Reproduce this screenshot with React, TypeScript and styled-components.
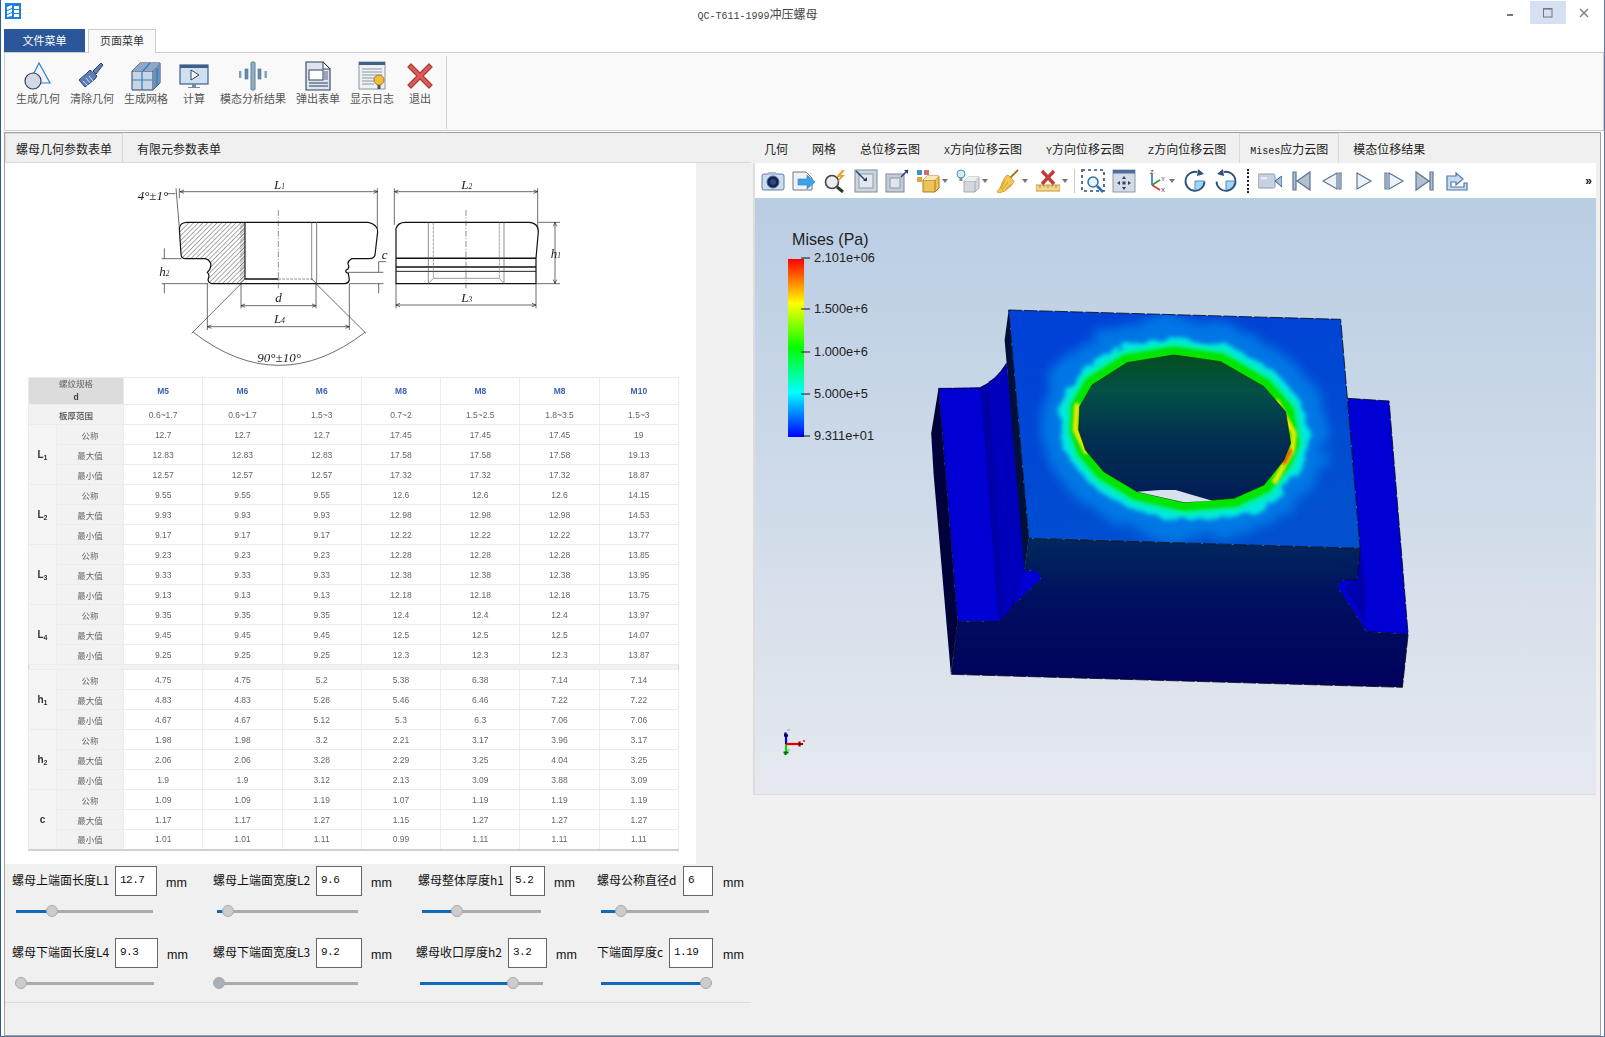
import React from "react";
import styled, { createGlobalStyle } from "styled-components";

const CJK = `"Noto Sans CJK SC", "Liberation Sans", sans-serif`;

const Global = createGlobalStyle`
  html, body { margin: 0; padding: 0; background: #fff; }
  * { box-sizing: border-box; }
  body { font-family: ${CJK}; }
`;

const Window = styled.div`
  width: 1605px;
  height: 1037px;
  background: #fff;
  border-left: 1px solid #2b579a;
  border-right: 1px solid #5f7698;
  border-bottom: 1px solid #5f7698;
  display: flex;
  flex-direction: column;
  overflow: hidden;
`;
const TitleBar = styled.header`
  height: 29px;
  display: flex;
  align-items: flex-start;
  padding-right: 2px;
  flex: none;
`;
const AppLogo = styled.svg`
  width: 16px;
  height: 16px;
  margin: 3px 0 0 4px;
  flex: none;
`;
const Title = styled.div`
  flex: 1;
  text-align: center;
  font-size: 12px;
  line-height: 16px;
  padding-top: 6px;
  color: #444;
`;
const Mono = styled.span<{ $size?: number }>`
  font-family: "Liberation Mono", monospace;
  font-size: ${(p) => p.$size ?? 10}px;
`;
const WinButton = styled.div<{ $hover?: boolean }>`
  width: 36px;
  height: 23px;
  display: flex;
  align-items: center;
  justify-content: center;
  background: ${(p) => (p.$hover ? "#d5e1f2" : "transparent")};
  margin-top: 1px;
`;
const MenuTabs = styled.nav`
  height: 23px;
  flex: none;
  display: flex;
  padding-left: 3px;
  position: relative;
  z-index: 1;
`;
const FileTab = styled.div`
  width: 81px;
  height: 23px;
  background: #2b579a;
  color: #fff;
  font-size: 11px;
  padding-bottom: 2px;
  display: flex;
  align-items: center;
  justify-content: center;
  margin-right: 3px;
`;
const PageTab = styled.div`
  width: 68px;
  height: 24px;
  background: #f9f9f9;
  border: 1px solid #ccc;
  border-bottom: none;
  color: #333;
  font-size: 11px;
  padding-bottom: 3px;
  display: flex;
  align-items: center;
  justify-content: center;
`;
const Ribbon = styled.section`
  height: 79px;
  flex: none;
  margin-left: 3px;
  background: #f9f9f9;
  border: 1px solid #ccc;
  display: flex;
  padding: 8px 0 0 11px;
  gap: 10px;
`;
const RibbonButton = styled.div`
  min-width: 32px;
  display: flex;
  flex-direction: column;
  align-items: center;
  font-size: 11px;
  line-height: 14px;
  color: #555;
  white-space: nowrap;
  svg {
    width: 30px;
    height: 30px;
    flex: none;
  }
`;
const RibbonDivider = styled.div`
  width: 1px;
  height: 73px;
  margin: -5px 0 0 0;
  background: #d4d4d4;
`;
const Frame = styled.main`
  margin: 1px 3px 0 3px;
  flex: 1;
  min-height: 0;
  background: #f0f0f0;
  border: 1px solid #a0a0a0;
  display: flex;
  gap: 2px;
`;
const LeftPane = styled.div`
  width: 746px;
  flex: none;
  display: flex;
  flex-direction: column;
`;
const TabStrip = styled.div`
  height: 30px;
  flex: none;
  display: flex;
  border-bottom: 1px solid #d9d9d9;
`;
const PaneTab = styled.div<{ $active?: boolean; $pad?: number; $margin?: string }>`
  height: 30px;
  padding: 0 ${(p) => p.$pad ?? 12}px;
  margin: ${(p) => p.$margin ?? "0"};
  font-size: 12px;
  line-height: 29px;
  color: #222;
  white-space: nowrap;
  border: 1px solid ${(p) => (p.$active ? "#d9d9d9" : "transparent")};
  border-bottom: none;
`;
const Sheet = styled.div`
  width: 691px;
  height: 701px;
  background: #fff;
  flex: none;
  padding-top: 2px;
`;
const Drawing = styled.svg`
  display: block;
  width: 500px;
  height: 210px;
  margin-left: 95px;
  filter: blur(0.4px);
`;
const SpecTable = styled.table`
  width: 651px;
  margin: 2px 0 0 23px;
  border-collapse: collapse;
  table-layout: fixed;
  font-family: "Liberation Sans", ${CJK};
  font-size: 8.5px;
  color: #666;
  text-align: center;
  filter: blur(0.3px);
  border: 1px solid #d0d0d0;
  border-bottom-width: 2px;
  td, th { padding: 0; font-weight: normal; border: 1px solid #ececec; height: 20px; }
`;
const HeadCell = styled.th`
  background: #dcdcdc;
  line-height: 13px;
  height: 27px !important;
  b { font-weight: bold; color: #444; }
`;
const SpecHead = styled.th`
  font-weight: bold !important;
  color: #3a62b8;
`;
const SideCell = styled.td`
  background: #f2f2f2;
`;
const KeyCell = styled.td`
  background: #f5f5f5;
  font-weight: bold !important;
  font-size: 10px;
  color: #333;
  sub { font-size: 7px; vertical-align: -2px; line-height: 0; }
`;
const GroupGap = styled.tr`
  td { height: 5px !important; background: #f2f2f2; border-left: none; border-right: none; }
`;
const ParamGrid = styled.div`
  display: grid;
  grid-template-columns: 201px 203px 181px 150px;
  grid-auto-rows: 72px;
  padding: 2px 0 0 7px;
  height: 139px;
  border-bottom: 1px solid #dcdcdc;
`;
const ParamGroup = styled.div<{ $indent?: number }>`
  padding-left: ${(p) => p.$indent ?? 0}px;
`;
const ParamLine = styled.div`
  height: 30px;
  display: flex;
  align-items: center;
`;
const ParamLabel = styled.label<{ $w: number }>`
  width: ${(p) => p.$w}px;
  flex: none;
  font-size: 12px;
  color: #111;
  white-space: nowrap;
  position: relative;
  margin-top: -3px;
`;
const ParamBox = styled.div<{ $w: number }>`
  width: ${(p) => p.$w}px;
  height: 30px;
  flex: none;
  background: #fff;
  border: 1px solid #666;
  font-family: "Liberation Mono", monospace;
  font-size: 11px;
  letter-spacing: -0.5px;
  line-height: 26px;
  padding-left: 4px;
  color: #111;
`;
const Unit = styled.span<{ $gap?: number }>`
  font-family: "Liberation Sans", sans-serif;
  font-size: 12.5px;
  color: #111;
  margin: 3px 0 0 ${(p) => p.$gap ?? 9}px;
`;
const SliderTrack = styled.div<{ $w: number }>`
  width: ${(p) => p.$w}px;
  height: 3px;
  margin: 14px 0 0 4px;
  background: #aaa;
  position: relative;
`;
const SliderFill = styled.div`
  position: absolute;
  left: 0;
  top: 0;
  height: 3px;
  background: #1168b8;
`;
const SliderKnob = styled.div<{ $dim?: boolean }>`
  position: absolute;
  top: -5px;
  width: 12px;
  height: 12px;
  margin-left: -6px;
  border-radius: 50%;
  background: ${(p) => (p.$dim ? "#aab0b6" : "#ccc")};
  border: 1px solid #aaa;
`;
const RightPane = styled.div`
  flex: 1;
  min-width: 0;
  display: flex;
  flex-direction: column;
  padding-right: 4px;
`;
const RightTabs = styled(TabStrip)`
  margin: 0 -4px 0 -1px;
  border-bottom: none;
  height: 30px;
`;
const ToolArea = styled.div`
  border-left: 2px solid #ddd;
  border-right: 0;
`;
const Toolbar = styled.div`
  height: 35px;
  background: #fff;
  display: flex;
  align-items: center;
  padding-left: 2px;
`;
const ToolButton = styled.div<{ $menu?: boolean }>`
  width: ${(p) => (p.$menu ? 40 : 31)}px;
  height: 30px;
  flex: none;
  display: flex;
  align-items: center;
  justify-content: center;
  gap: 2px;
  svg { width: 24px; height: 24px; flex: none; }
`;
const Caret = styled.i`
  width: 0;
  height: 0;
  flex: none;
  border: 3px solid transparent;
  border-top: 4px solid #777;
  border-bottom: none;
`;
const ToolSep = styled.div<{ $dotted?: boolean; $w: number }>`
  width: ${(p) => p.$w}px;
  flex: none;
  height: 24px;
  display: flex;
  justify-content: center;
  &::after {
    content: "";
    display: block;
    border-left: ${(p) => (p.$dotted ? "2px dotted #222" : "1px solid #ccc")};
    height: 100%;
  }
`;
const Overflow = styled.div`
  margin-left: auto;
  margin-right: 4px;
  font-family: "Liberation Sans", sans-serif;
  font-size: 12px;
  font-weight: bold;
  color: #111;
`;
const Viewport = styled.div`
  height: 597px;
  background: linear-gradient(#b9cde3, #e6e9ef);
  border-bottom: 1px solid #ddd;
  position: relative;
  svg { display: block; width: 100%; height: 100%; }
`;

const Cam = () => (<svg viewBox="0 0 24 24"><rect x="1" y="5" width="22" height="16" rx="2" fill="#cfdcec" stroke="#5f7fa8" /><rect x="7" y="3" width="8" height="3" fill="#a9bdd6" /><circle cx="12" cy="13" r="6" fill="#16264e" stroke="#4a6a9a" /><circle cx="12" cy="13" r="3" fill="#2a4a8a" /></svg>);
const Exp = () => (<svg viewBox="0 0 24 24"><path d="M1 3h13l6 6v12H1z" fill="#eef1f5" stroke="#777" /><path d="M6 10h9V6l8 7-8 7v-4H6z" fill="#3ea3e6" stroke="#2a7fc0" strokeWidth=".6" /></svg>);
const ZoomBolt = () => (<svg viewBox="0 0 24 24"><circle cx="9" cy="13" r="6.5" fill="#e6edf4" stroke="#444" strokeWidth="1.6" /><path d="M14 18l6 5" stroke="#333" strokeWidth="3" /><path d="M19 1l-6 7h4l-3 6 8-8h-4l4-5z" fill="#e8a33a" /></svg>);
const BoxIn = () => (<svg viewBox="0 0 24 24"><rect x="1" y="1" width="22" height="22" fill="#cdd6e0" stroke="#7a8a9c" /><rect x="5" y="5" width="14" height="14" fill="#e4e9ef" stroke="#8a98a8" /><path d="M2 2l10 10" stroke="#1f3f70" strokeWidth="1.4" /><path d="M9 12h4V8z" fill="#1f3f70" /></svg>);
const BoxOut = () => (<svg viewBox="0 0 24 24"><rect x="1" y="5" width="18" height="18" fill="#c3ccd6" stroke="#7a8a9c" /><rect x="5" y="9" width="10" height="10" fill="#dfe5eb" stroke="#8a98a8" /><path d="M16 8l7-7" stroke="#1f3f70" strokeWidth="1.4" /><path d="M19 1h4v4z" fill="#1f3f70" /></svg>);
const Cubes = () => (<svg viewBox="0 0 24 24"><rect x="1" y="1" width="5" height="5" fill="#3f8fd8" /><rect x="8" y="1" width="5" height="5" fill="#d46a6a" /><rect x="1" y="8" width="5" height="5" fill="#e8a33a" /><path d="M7 11l4-4h12v12l-4 4H7z" fill="#eec15a" stroke="#a8801f" /><path d="M7 11h12v12M19 11l4-4" stroke="#a8801f" fill="none" /><path d="M11 7h12l-4 4H7z" fill="#f6e6b8" /></svg>);
const Bulb = () => (<svg viewBox="0 0 24 24"><circle cx="5" cy="5" r="4" fill="#d6ecfb" stroke="#3a8fd0" /><rect x="3.4" y="9" width="3" height="3" fill="#888" /><path d="M8 12l4-4h11v11l-4 4H8z" fill="#d4d8dc" stroke="#a8aeb4" /><path d="M8 12h11v11M19 12l4-4" stroke="#a8aeb4" fill="none" /><path d="M12 8h11l-4 4H8z" fill="#eef0f2" /></svg>);
const Broom = () => (<svg viewBox="0 0 24 24"><path d="M22 1L13 10" stroke="#a8701f" strokeWidth="1.8" /><path d="M10 7l2-1 6 6-1 2-2 3-6 5-6 2-2-1 3-4 2-5 2-4z" fill="#f6c552" stroke="#c08a20" strokeWidth=".7" /><path d="M9 11l-4 9M12 13l-6 8M15 15l-5 5" stroke="#c99428" strokeWidth=".7" fill="none" /></svg>);
const RuleX = () => (<svg viewBox="0 0 24 24"><rect x="0" y="16" width="24" height="6" fill="#f2d68a" stroke="#c49a3a" /><path d="M4 16v3M8 16v2M12 16v3M16 16v2M20 16v3" stroke="#b08a30" /><path d="M6 2l12 13M18 2L6 15" stroke="#c33a3a" strokeWidth="3.4" /></svg>);
const ZoomBox = () => (<svg viewBox="0 0 24 24"><rect x="1" y="1" width="22" height="21" fill="none" stroke="#2a4a8a" strokeWidth="1.6" strokeDasharray="3 3" /><circle cx="12" cy="13" r="5" fill="#eaf3fb" stroke="#2f6fb0" strokeWidth="1.5" /><path d="M16 17l6 6" stroke="#2f6fb0" strokeWidth="2.6" /></svg>);
const Pan = () => (<svg viewBox="0 0 24 24"><rect x="1" y="1" width="22" height="22" fill="#d4dbe6" stroke="#8a98aa" /><rect x="1" y="1" width="22" height="3.5" fill="#4f6f9c" /><path d="M12 7l2 3h-4zM12 21l2-3h-4zM5 14l3-2v4zM19 14l-3-2v4z" fill="#2a3f66" /><rect x="10.5" y="12.5" width="3" height="3" fill="#2a3f66" /></svg>);
const Axes = () => (<svg viewBox="0 0 24 24"><path d="M9 16V5" stroke="#2a6fd0" strokeWidth="1.6" /><path d="M9 16l8-5" stroke="#2a9a3a" strokeWidth="1.6" /><path d="M9 16l8 5" stroke="#d03a3a" strokeWidth="1.6" /><text x="7" y="4.6" fontSize="6" fontFamily="Liberation Sans" fill="#333">Z</text><text x="18" y="12" fontSize="6" fontFamily="Liberation Sans" fill="#333">Y</text><text x="18" y="23" fontSize="6" fontFamily="Liberation Sans" fill="#333">X</text></svg>);
const RotR = () => (<svg viewBox="0 0 24 24"><path d="M12 12h9.5a9.5 9.5 0 0 1-9.5 9.5z" fill="#9fd4f2" /><path d="M14 3a9.5 9.5 0 1 0 7.5 9.5" fill="none" stroke="#2f4f78" strokeWidth="1.8" /><path d="M12 12v9.5M12 12h9.5" stroke="#4a90c8" /><path d="M15 0l6 5-7 2z" fill="#2f4f78" /></svg>);
const RotL = () => (<svg viewBox="0 0 24 24"><path d="M12 12h9.5a9.5 9.5 0 0 1-9.5 9.5z" fill="#9fd4f2" /><path d="M10 3a9.5 9.5 0 1 1-7.5 9.5" fill="none" stroke="#2f4f78" strokeWidth="1.8" /><path d="M12 12v9.5M12 12h9.5" stroke="#4a90c8" /><path d="M9 0L3 5l7 2z" fill="#2f4f78" /></svg>);
const Video = () => (<svg viewBox="0 0 24 24"><rect x="0" y="5" width="17" height="14" rx="1.5" fill="#c6d2e0" stroke="#8a9bb0" /><rect x="3" y="8" width="6" height="2.4" fill="#e8eef4" /><path d="M17 12l7-5v11z" fill="#9fc6e6" stroke="#2f557f" /></svg>);
const Transport = ({ d, fill }: { d: string; fill: string }) => (<svg viewBox="0 0 24 24"><path d={d} fill={fill} stroke="#5c7497" strokeWidth="1.2" /></svg>);
const ShareOut = () => (<svg viewBox="0 0 24 24"><path d="M3 7h9V4l7 6-7 6v-3H7v5h13v-4h3v7H3z" fill="#c8daf0" stroke="#4f78a8" strokeWidth="1.2" /></svg>);

const RibGeom = () => (<svg viewBox="0 0 30 30"><path d="M16 2l11 20H6z" fill="#f2f6fa" stroke="#2a80c8" strokeWidth="1.2" /><circle cx="10" cy="20" r="8" fill="#d4d8e2" stroke="#2f3f66" strokeWidth="1.2" /></svg>);
const RibBrush = () => (<svg viewBox="0 0 30 30"><path d="M24 2l2 2-7 9-3-3z" fill="#5a7fb8" stroke="#2f3f66" /><path d="M13 9l7 6-2 3-10 8-6-7 8-7z" fill="#5a7fb8" stroke="#2f3f66" /><path d="M6 20l5 5M9 17l5 6M12 15l4 5" stroke="#cfdcec" strokeWidth="1" /></svg>);
const RibMesh = () => (<svg viewBox="0 0 30 30"><path d="M1 10l8-8h20v20l-7 7H1z" fill="#c8d6e4" stroke="#2f3f66" /><path d="M1 10h21v19M22 10l7-8" stroke="#2f3f66" fill="none" /><path d="M9 2h20l-7 8H1z" fill="#8fa8c8" /><path d="M22 10l7-8v20l-7 7z" fill="#6f8fb8" /><path d="M11 10v19M1 19h21M19 2l-7 8M26 7v18" stroke="#2a7fc0" strokeWidth="1.2" /></svg>);
const RibRun = () => (<svg viewBox="0 0 30 30"><rect x="1" y="4" width="28" height="19" fill="#cfe0f0" stroke="#3f5f88" strokeWidth="1.2" /><rect x="1" y="4" width="28" height="3" fill="#3f5f88" /><path d="M12 9l8 5-8 5z" fill="#fff" stroke="#2f3f66" /><path d="M13 23h4v3h-4zM9 26h12v1H9z" fill="#7a8a9c" /></svg>);
const RibModal = () => (<svg viewBox="0 0 30 30"><rect x="13" y="1" width="4" height="28" rx="1" fill="#8fb0c4" stroke="#5f8096" /><rect x="7" y="8" width="3" height="10" fill="#6f8fa8" stroke="#3f6f98" strokeWidth=".6" /><rect x="20" y="8" width="3" height="10" fill="#6f8fa8" stroke="#3f6f98" strokeWidth=".6" /><rect x="1" y="10" width="2.4" height="7" fill="#7fa0b8" /><rect x="26.5" y="10" width="2.4" height="7" fill="#7fa0b8" /></svg>);
const RibSheet = () => (<svg viewBox="0 0 30 30"><path d="M3 1h17l7 7v21H3z" fill="#dfe5ec" stroke="#2f3f66" strokeWidth="1.1" /><path d="M20 1v7h7z" fill="#fff" stroke="#2f3f66" /><rect x="6" y="9" width="14" height="10" fill="#fff" stroke="#2f3f66" /><rect x="21" y="10" width="4" height="9" fill="#9aa6b4" /><path d="M6 22h19M6 25h19" stroke="#2f3f66" /></svg>);
const RibLog = () => (<svg viewBox="0 0 30 30"><rect x="2" y="1" width="26" height="27" fill="#eef1f4" stroke="#8a96a6" /><rect x="2" y="1" width="26" height="3" fill="#3f5f88" /><path d="M5 8h20M5 11h20M5 14h20M5 17h14M5 20h12M5 23h12" stroke="#8a98a8" /><circle cx="22" cy="19" r="5" fill="#f2bf3a" stroke="#b07a1a" /><rect x="20.5" y="24" width="3" height="4" fill="#555" /></svg>);
const RibExit = () => (<svg viewBox="0 0 30 30"><path d="M3 6l3-3 9 9 9-9 3 3-9 9 9 9-3 3-9-9-9 9-3-3 9-9z" fill="#e05a5a" stroke="#a83a3a" strokeWidth="1.2" strokeLinejoin="round" /></svg>);

const ribbonItems: [string, React.FC][] = [
  ["生成几何", RibGeom], ["清除几何", RibBrush], ["生成网格", RibMesh], ["计算", RibRun],
  ["模态分析结果", RibModal], ["弹出表单", RibSheet], ["显示日志", RibLog], ["退出", RibExit],
];

const rows: { key?: React.ReactNode; span?: number; side: string; v: string[] }[] = [
  { key: <>L<sub>1</sub></>, side: "公称", v: ["12.7","12.7","12.7","17.45","17.45","17.45","19"] },
  { side: "最大值", v: ["12.83","12.83","12.83","17.58","17.58","17.58","19.13"] },
  { side: "最小值", v: ["12.57","12.57","12.57","17.32","17.32","17.32","18.87"] },
  { key: <>L<sub>2</sub></>, side: "公称", v: ["9.55","9.55","9.55","12.6","12.6","12.6","14.15"] },
  { side: "最大值", v: ["9.93","9.93","9.93","12.98","12.98","12.98","14.53"] },
  { side: "最小值", v: ["9.17","9.17","9.17","12.22","12.22","12.22","13.77"] },
  { key: <>L<sub>3</sub></>, side: "公称", v: ["9.23","9.23","9.23","12.28","12.28","12.28","13.85"] },
  { side: "最大值", v: ["9.33","9.33","9.33","12.38","12.38","12.38","13.95"] },
  { side: "最小值", v: ["9.13","9.13","9.13","12.18","12.18","12.18","13.75"] },
  { key: <>L<sub>4</sub></>, side: "公称", v: ["9.35","9.35","9.35","12.4","12.4","12.4","13.97"] },
  { side: "最大值", v: ["9.45","9.45","9.45","12.5","12.5","12.5","14.07"] },
  { side: "最小值", v: ["9.25","9.25","9.25","12.3","12.3","12.3","13.87"] },
  { key: <>h<sub>1</sub></>, side: "公称", v: ["4.75","4.75","5.2","5.38","6.38","7.14","7.14"] },
  { side: "最大值", v: ["4.83","4.83","5.28","5.46","6.46","7.22","7.22"] },
  { side: "最小值", v: ["4.67","4.67","5.12","5.3","6.3","7.06","7.06"] },
  { key: <>h<sub>2</sub></>, side: "公称", v: ["1.98","1.98","3.2","2.21","3.17","3.96","3.17"] },
  { side: "最大值", v: ["2.06","2.06","3.28","2.29","3.25","4.04","3.25"] },
  { side: "最小值", v: ["1.9","1.9","3.12","2.13","3.09","3.88","3.09"] },
  { key: "c", side: "公称", v: ["1.09","1.09","1.19","1.07","1.19","1.19","1.19"] },
  { side: "最大值", v: ["1.17","1.17","1.27","1.15","1.27","1.27","1.27"] },
  { side: "最小值", v: ["1.01","1.01","1.11","0.99","1.11","1.11","1.11"] },
];

const params = [
  { label: "螺母上端面长度L1", lw: 103, w: 42, val: "12.7", track: 137, pos: 36 },
  { label: "螺母上端面宽度L2", lw: 103, w: 46, val: "9.6", track: 141, pos: 11 },
  { label: "螺母整体厚度h1", lw: 92, w: 35, val: "5.2", track: 119, pos: 35, indent: 2 },
  { label: "螺母公称直径d", lw: 86, w: 30, val: "6", track: 108, pos: 20, gap: 10 },
  { label: "螺母下端面长度L4", lw: 103, w: 43, val: "9.3", track: 138, pos: 5 },
  { label: "螺母下端面宽度L3", lw: 103, w: 46, val: "9.2", track: 141, pos: 2, dim: true },
  { label: "螺母收口厚度h2", lw: 92, w: 39, val: "3.2", track: 123, pos: 93 },
  { label: "下端面厚度c", lw: 72, w: 44, val: "1.19", track: 108, pos: 105, gap: 10 },
];

const Dim = ({ d }: { d: string }) => <path d={d} fill="none" stroke="#222" strokeWidth="2" />;
const DimText = ({ x, y, t, s }: { x: number; y: number; t: string; s?: string }) => (
  <text x={x} y={y} fontFamily="Liberation Serif" fontStyle="italic" fontSize="39" fill="#222">
    {t}
    {s && <tspan fontSize="22">{s}</tspan>}
  </text>
);

const NutDrawing = () => (
  <Drawing viewBox="0 0 1500 630">
    <defs>
      <pattern id="hatch" width="10" height="10" patternUnits="userSpaceOnUse" patternTransform="rotate(45)">
        <rect width="10" height="10" fill="#fff" />
        <path d="M0 0V10" stroke="#555" strokeWidth="3" />
      </pattern>
      <pattern id="hatchFine" width="6" height="6" patternUnits="userSpaceOnUse" patternTransform="rotate(45)">
        <path d="M0 0V6" stroke="#444" strokeWidth="2.4" />
      </pattern>
    </defs>
    <path d="M238 190L262 172H435V340L420 356H335Q322 352 325 340Q330 330 322 322Q335 310 332 295Q325 281 312 281H255Q243 280 243 268Z" fill="url(#hatch)" />
    <path d="M420 172H435V342L420 356z" fill="url(#hatchFine)" />
    <path d="M238 190Q240 172 262 172H805Q833 178 833 200L825 270Q822 281 808 281H755Q740 290 745 300Q750 310 738 316Q735 322 745 325L748 345Q745 355 735 356H335Q322 352 325 340Q330 330 322 322Q335 310 332 295Q325 281 312 281H255Q243 280 243 268Z" fill="none" stroke="#111" strokeWidth="3.6" />
    <path d="M435 172V342" stroke="#111" strokeWidth="3.4" />
    <path d="M635 172V345" stroke="#555" strokeWidth="2" />
    <path d="M650 172V356" stroke="#777" strokeWidth="3" />
    <path d="M435 342H535" stroke="#111" strokeWidth="4.4" />
    <path d="M535 342H640" stroke="#555" strokeWidth="2" strokeDasharray="8 4" />
    <path d="M420 356L435 342M650 356L635 342" stroke="#333" strokeWidth="2" />
    <path d="M535 135V370" stroke="#444" strokeWidth="1.8" strokeDasharray="18 5 3 5" />
    <Dim d="M240 80H833M252 75L240 80L252 85M821 75L833 80L821 85M832 70V190M228 70L238 190M238 70V100M200 86H226" />
    <DimText x={113} y={105} t="4°±1°" />
    <DimText x={522} y={72} t="L" s="1" />
    <Dim d="M193 250V281M193 356V385M185 281H245M185 356H325" />
    <DimText x={178} y={332} t="h" s="2" />
    <Dim d="M836 290V322M836 356V385M745 322H850M748 356H850M836 290H858" />
    <DimText x={845} y={282} t="c" />
    <Dim d="M423 422H648M435 417L423 422L435 427M636 417L648 422L636 427M423 356V430M648 356V430" />
    <DimText x={526} y={412} t="d" />
    <Dim d="M322 485H748M334 480L322 485L334 490M736 480L748 485L736 490M322 356V495M748 356V495" />
    <DimText x={522} y={475} t="L" s="4" />
    <Dim d="M423 356L275 505M648 356L798 505M280 502Q537 700 795 502" />
    <DimText x={472} y={592} t="90°±10°" />
    <path d="M888 190Q895 172 915 172H1290Q1315 175 1315 200L1308 280V356H888V280Z" fill="none" stroke="#111" strokeWidth="3.6" />
    <path d="M888 280H1308M888 306H1308" stroke="#111" strokeWidth="4.4" />
    <path d="M888 319H1308" stroke="#222" strokeWidth="3" />
    <path d="M985 172V356M1212 172V356" stroke="#555" strokeWidth="2" />
    <path d="M1000 172V340M1198 172V340" stroke="#777" strokeWidth="2" strokeDasharray="10 2" />
    <path d="M985 356L1000 340H1198L1212 356" fill="none" stroke="#666" strokeWidth="2" />
    <path d="M1098 135V370" stroke="#444" strokeWidth="1.8" strokeDasharray="18 5 3 5" />
    <Dim d="M883 80H1313M895 75L883 80L895 85M1301 75L1313 80L1301 85M883 70V180M1313 70V190" />
    <DimText x={1084} y={72} t="L" s="2" />
    <Dim d="M1365 172V356M1360 184L1365 172L1370 184M1360 344L1365 356L1370 344M1315 172H1380M1310 356H1380" />
    <DimText x={1352} y={278} t="h" s="1" />
    <Dim d="M888 420H1308M900 415L888 420L900 425M1296 415L1308 420L1296 425M888 356V430M1308 356V430" />
    <DimText x={1084} y={412} t="L" s="3" />
  </Drawing>
);

const holePts = "820,195 680,218 575,285 538,350 535,420 555,480 610,545 710,605 850,637 1000,625 1090,585 1150,510 1170,460 1155,365 1090,290 960,215";
const rightNotch = "L1370,870 L1330,870 Q1305,878 1312,895 L1385,1005 Q1392,1024 1400,1025";

const Scene = () => (
  <svg viewBox="755 198 840 596" preserveAspectRatio="none">
    <defs>
      <linearGradient id="legend" x1="0" y1="0" x2="0" y2="1">
        <stop offset="0" stopColor="#ff0000" />
        <stop offset=".25" stopColor="#ffff00" />
        <stop offset=".5" stopColor="#00ff00" />
        <stop offset=".75" stopColor="#00ffff" />
        <stop offset="1" stopColor="#0000ff" />
      </linearGradient>
      <linearGradient id="front" x1="0" y1="0" x2="0" y2="1">
        <stop offset="0" stopColor="#00285c" />
        <stop offset=".4" stopColor="#001060" />
        <stop offset="1" stopColor="#00005c" />
      </linearGradient>
      <linearGradient id="top" x1="0" y1="0" x2="0.4" y2="1">
        <stop offset="0" stopColor="#0040d8" />
        <stop offset=".55" stopColor="#0048d4" />
        <stop offset="1" stopColor="#0050d0" />
      </linearGradient>
      <linearGradient id="hole" x1="0" y1="0" x2="0" y2="1">
        <stop offset="0" stopColor="#03501f" />
        <stop offset=".25" stopColor="#035048" />
        <stop offset=".55" stopColor="#02304f" />
        <stop offset="1" stopColor="#001c58" />
      </linearGradient>
      <filter id="soft2" x="-20%" y="-20%" width="140%" height="140%"><feGaussianBlur stdDeviation="5" /></filter>
      <filter id="rough" x="-20%" y="-20%" width="140%" height="140%">
        <feTurbulence type="fractalNoise" baseFrequency="0.022" numOctaves="2" seed="7" />
        <feDisplacementMap in="SourceGraphic" scale="46" />
        <feGaussianBlur stdDeviation="7" />
      </filter>
      <filter id="roughWide" x="-30%" y="-30%" width="160%" height="160%">
        <feTurbulence type="fractalNoise" baseFrequency="0.018" numOctaves="2" seed="3" />
        <feDisplacementMap in="SourceGraphic" scale="70" />
        <feGaussianBlur stdDeviation="16" />
      </filter>
      <clipPath id="topClip"><polygon points="325,60 1320,88 1378,775 385,745" /></clipPath>
    </defs>

    <text x="792" y="245" fontFamily="Liberation Sans" fontSize="16" fill="#222">Mises (Pa)</text>
    <rect x="788" y="259" width="16" height="178" fill="url(#legend)" />
    <path d="M801 258h9M801 309h9M801 352h9M801 394h9M801 436h9" stroke="#111" strokeWidth="1" />
    {[["2.101e+06", 262], ["1.500e+6", 313], ["1.000e+6", 356], ["5.000e+5", 398], ["9.311e+01", 440]].map(([t, y]) => (
      <text key={t} x="814" y={y} fontFamily="Liberation Sans" fontSize="12.8" fill="#222">{t}</text>
    ))}

    <g fill="none">
      <path d="M786 744V735" stroke="#0000e0" strokeWidth="2.2" />
      <path d="M784 735.5h4M785.5 732.5v3" stroke="#00006a" strokeWidth="2.4" />
      <path d="M786 744V752" stroke="#00e000" strokeWidth="2.2" />
      <path d="M783.5 752.5h5M785.5 752v3" stroke="#007000" strokeWidth="2.2" />
      <path d="M786 744H800" stroke="#e00000" strokeWidth="2.2" />
      <path d="M799.5 741.5v5M800 744h3" stroke="#8a0000" strokeWidth="2.2" />
    </g>
    <path d="M787.5 730h2M787.5 750h2" stroke="#5080e0" strokeWidth="1.2" />
    <path d="M803 740l2 2M805 740l-2 2" stroke="#e03030" strokeWidth="1" />

    <g transform="translate(900 290) scale(0.33333)">
      <polygon points="115,295 93,430 100,550 152,1153 172,995" fill="#00003c" />
      <path d="M115,295 L240,292 Q290,270 318,220 L385,745 L372,840 L405,842 Q428,850 420,870 L350,935 Q310,990 295,993 L172,995Z" fill="#0000d4" />
      <path d="M240,292 Q290,270 318,220 L372,840 L340,950 Q315,985 295,993Z" fill="#0000a8" />
      <path d="M265,275 Q295,260 318,220 L372,840 L330,960 L312,980Z" fill="#0000bc" />
      <path d="M1340,325 L1465,333 L1522,1033 L1400,1025 Q1392,1024 1385,1005 L1312,895 Q1305,878 1330,870 L1370,870 L1378,775Z" fill="#0000d4" />
      <polygon points="1378,775 1370,870 1330,890 1395,1000 1395,880" fill="#0000b0" />
      <path d={`M385,745 L1378,775 ${rightNotch} L1522,1033 L1505,1192 L153,1153 L172,995 L295,993 Q310,990 350,935 L420,870 Q428,850 405,842 L372,840Z`} fill="url(#front)" />
      <polygon points="325,60 313,150 372,840 385,745" fill="#001038" />
      <polygon points="325,60 1320,88 1378,775 385,745" fill="url(#top)" />
      <g clipPath="url(#topClip)">
        <polygon points={holePts} fill="none" stroke="#0080e8" strokeWidth="230" strokeLinejoin="round" filter="url(#roughWide)" opacity=".85" />
        <polygon points={holePts} fill="none" stroke="#00e8e0" strokeWidth="110" strokeLinejoin="round" filter="url(#rough)" />
        <polygon points={holePts} fill="none" stroke="#00f0a0" strokeWidth="76" strokeLinejoin="round" filter="url(#soft2)" />
        <polygon points={holePts} fill="none" stroke="#00e400" strokeWidth="50" strokeLinejoin="round" filter="url(#soft2)" />
        <path d="M1125 330L1180 430L1175 480L1120 580M530 340L525 420L560 490" fill="none" stroke="#f0e800" strokeWidth="16" filter="url(#soft2)" />
        <path d="M1172 478L1148 522" stroke="#f04000" strokeWidth="11" fill="none" filter="url(#soft2)" opacity=".95" />
      </g>
      <polygon points={holePts} fill="url(#hole)" stroke="#102800" strokeWidth="2" />
      <polygon points="710,605 780,600 825,600 935,632 850,637" fill="#d8e2ec" />
      <g fill="none" stroke="#05050f" strokeWidth="2.4" strokeDasharray="40 6">
        <path d="M325 60L1320 88L1378 775L385 745Z" />
        <path d="M115 295H240Q290 270 318 220M115 295L172 995H295Q310 990 350 935L420 870Q428 850 405 842L372 840M1340 325L1465 333L1522 1033L1505 1192L153 1153L172 995" />
        <path d={`M1378 775 ${rightNotch} L1522 1033`} />
      </g>
    </g>
  </svg>
);

const MainTabs: { t: React.ReactNode; active?: boolean }[] = [
  { t: "几何" }, { t: "网格" }, { t: "总位移云图" },
  { t: <><Mono>X</Mono>方向位移云图</> }, { t: <><Mono>Y</Mono>方向位移云图</> }, { t: <><Mono>Z</Mono>方向位移云图</> },
  { t: <><Mono>Mises</Mono>应力云图</>, active: true }, { t: "模态位移结果" },
];

export default function App() {
  return (
    <>
      <Global />
      <Window>
        <TitleBar>
          <AppLogo viewBox="0 0 16 16">
            <rect width="16" height="16" fill="#1e7fe0" />
            <path d="M2 4l5-2v3L2 7zM2 8l5-2v3l-5 2zM2 12l5-2v3l-5 1zM9 3h5v3H9zM9 7h5v3H9zM9 11h5v3H9z" fill="#fff" />
          </AppLogo>
          <Title><Mono>QC-T611-1999</Mono>冲压螺母</Title>
          <WinButton>
            <svg width="10" height="10" viewBox="0 0 10 10"><rect x="0" y="6" width="6" height="2" fill="#777" /></svg>
          </WinButton>
          <WinButton $hover>
            <svg width="10" height="10" viewBox="0 0 10 10"><rect x=".5" y=".5" width="8.5" height="8.5" fill="none" stroke="#777" /><rect x="0" y="0" width="9" height="1.6" fill="#777" /></svg>
          </WinButton>
          <WinButton>
            <svg width="10" height="10" viewBox="0 0 10 10"><path d="M1 1l8 8M9 1l-8 8" stroke="#777" strokeWidth="1.3" /></svg>
          </WinButton>
        </TitleBar>
        <MenuTabs>
          <FileTab>文件菜单</FileTab>
          <PageTab>页面菜单</PageTab>
        </MenuTabs>
        <Ribbon>
          {ribbonItems.map(([label, Icon]) => (
            <RibbonButton key={label}><Icon />{label}</RibbonButton>
          ))}
          <RibbonDivider />
        </Ribbon>
        <Frame>
          <LeftPane>
            <TabStrip>
              <PaneTab $active $pad={10}>螺母几何参数表单</PaneTab>
              <PaneTab $pad={13}>有限元参数表单</PaneTab>
            </TabStrip>
            <Sheet>
              <NutDrawing />
              <SpecTable>
                <colgroup>
                  <col width="28" /><col width="67" />
                  {[0,1,2,3,4,5,6].map((i) => <col key={i} />)}
                </colgroup>
                <tbody>
                  <tr>
                    <HeadCell colSpan={2}>螺纹规格<br /><b>d</b></HeadCell>
                    {["M5","M6","M6","M8","M8","M8","M10"].map((m, i) => <SpecHead key={i}>{m}</SpecHead>)}
                  </tr>
                  <tr>
                    <SideCell colSpan={2}><b>板厚范围</b></SideCell>
                    {["0.6~1.7","0.6~1.7","1.5~3","0.7~2","1.5~2.5","1.8~3.5","1.5~3"].map((v, i) => <td key={i}>{v}</td>)}
                  </tr>
                  {rows.map((r, i) => (
                    <React.Fragment key={i}>
                      {i === 12 && <GroupGap><td colSpan={9} /></GroupGap>}
                      <tr>
                        {r.key && <KeyCell rowSpan={3}>{r.key}</KeyCell>}
                        <SideCell>{r.side}</SideCell>
                        {r.v.map((v, j) => <td key={j}>{v}</td>)}
                      </tr>
                    </React.Fragment>
                  ))}
                </tbody>
              </SpecTable>
            </Sheet>
            <ParamGrid>
              {params.map((p) => (
                <ParamGroup key={p.label} $indent={p.indent}>
                  <ParamLine>
                    <ParamLabel $w={p.lw}>{p.label}</ParamLabel>
                    <ParamBox $w={p.w}>{p.val}</ParamBox>
                    <Unit $gap={p.gap}>mm</Unit>
                  </ParamLine>
                  <SliderTrack $w={p.track}>
                    <SliderFill style={{ width: p.pos }} />
                    <SliderKnob $dim={p.dim} style={{ left: p.pos }} />
                  </SliderTrack>
                </ParamGroup>
              ))}
            </ParamGrid>
          </LeftPane>
          <RightPane>
            <RightTabs>
              {MainTabs.map(({ t, active }, i) => (
                <PaneTab key={i} $active={active} $pad={active ? 10 : 11} $margin={active ? "0 2px 0 1px" : undefined}>{t}</PaneTab>
              ))}
            </RightTabs>
            <ToolArea>
              <Toolbar>
                <ToolButton><Cam /></ToolButton>
                <ToolButton><Exp /></ToolButton>
                <ToolButton><ZoomBolt /></ToolButton>
                <ToolButton><BoxIn /></ToolButton>
                <ToolButton><BoxOut /></ToolButton>
                <ToolButton $menu><Cubes /><Caret /></ToolButton>
                <ToolButton $menu><Bulb /><Caret /></ToolButton>
                <ToolButton $menu><Broom /><Caret /></ToolButton>
                <ToolButton $menu><RuleX /><Caret /></ToolButton>
                <ToolSep $w={5} />
                <ToolButton><ZoomBox /></ToolButton>
                <ToolButton><Pan /></ToolButton>
                <ToolButton $menu><Axes /><Caret /></ToolButton>
                <ToolButton><RotR /></ToolButton>
                <ToolButton><RotL /></ToolButton>
                <ToolSep $dotted $w={13} />
                <ToolButton><Video /></ToolButton>
                <ToolButton><Transport d="M4 3h3v18H4zM21 3v18L8 12z" fill="#b4c0d0" /></ToolButton>
                <ToolButton><Transport d="M3 12L17 4v16zM19 4h2v16h-2z" fill="#eef2f8" /></ToolButton>
                <ToolButton><Transport d="M6 4l14 8-14 8z" fill="#eef2f8" /></ToolButton>
                <ToolButton><Transport d="M3 4h2v16H3zM7 4l14 8-14 8z" fill="#eef2f8" /></ToolButton>
                <ToolButton><Transport d="M3 3v18l13-9zM17 3h3v18h-3z" fill="#b4c0d0" /></ToolButton>
                <ToolButton><ShareOut /></ToolButton>
                <Overflow>»</Overflow>
              </Toolbar>
              <Viewport><Scene /></Viewport>
            </ToolArea>
          </RightPane>
        </Frame>
      </Window>
    </>
  );
}
